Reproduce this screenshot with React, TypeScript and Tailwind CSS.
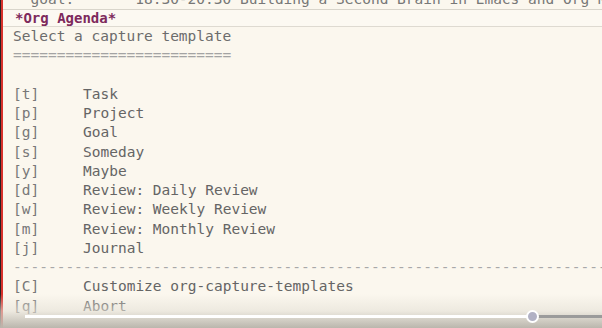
const items: [string, string][] = [
  ['t', 'Task'],
  ['p', 'Project'],
  ['g', 'Goal'],
  ['s', 'Someday'],
  ['y', 'Maybe'],
  ['d', 'Review: Daily Review'],
  ['w', 'Review: Weekly Review'],
  ['m', 'Review: Monthly Review'],
  ['j', 'Journal'],
];

function Row({ k, label }: { k: string; label: string }) {
  return (
    <div className="flex h-[19.25px] items-center whitespace-pre">
      <span className="w-[70px] text-[#787878]">[{k}]</span>
      <span className="text-[#656565]">{label}</span>
    </div>
  );
}

export default function App() {
  return (
    <div
      className="relative flex h-[328px] w-[602px] overflow-hidden bg-[#fbf7ee] text-[14.5px]"
      style={{ fontFamily: '"DejaVu Sans Mono", monospace' }}
    >
      <div className="w-px bg-[#2a2020]" />
      <div className="w-[2px] bg-[#d8322c]" />

      <div className="flex min-w-0 flex-1 flex-col">
        {/* previous window, scrolled mostly out of view */}
        <div className="h-[9px] overflow-hidden">
          <div className="mt-[-10px] whitespace-pre pl-[10px] leading-[19px] text-[#777]">
            {'  goal:       18:30-20:30 Building a Second Brain in Emacs and Org Mode'}
          </div>
        </div>
        <div className="h-px bg-[#d9d5cb]" />
        <div className="flex h-[16px] items-center bg-[#fcf9f2] pl-[12px] text-[14px] font-bold text-[#7e2a5c]">
          *Org Agenda*
        </div>
        <div className="h-px bg-[#dedad1]" />

        <div className="flex flex-col pl-[10px] leading-[19.25px]">
          <div className="h-[19.25px] whitespace-pre text-[#6c6c6c]">Select a capture template</div>
          <div className="h-[19.25px] whitespace-pre text-[#a3a3a3]">=========================</div>
          <div className="h-[19.25px]" />
          {items.map(([k, l]) => (
            <Row key={k} k={k} label={l} />
          ))}
          <div className="h-[19.25px] overflow-hidden whitespace-pre text-[#a8a8a8]">
            {'-'.repeat(80)}
          </div>
          <Row k="C" label="Customize org-capture-templates" />
          <Row k="q" label="Abort" />
        </div>
      </div>

      {/* video player overlay */}
      <div className="absolute inset-x-0 bottom-0 h-[34px] bg-gradient-to-b from-transparent via-[#e4e0d6]/60 to-[#bab6ad]" />
      <div className="absolute bottom-[10px] left-[25px] h-[3px] w-[508px] bg-white" />
      <div className="absolute bottom-[10px] left-[533px] h-[3px] w-[69px] bg-[#9b9b9b]" />
      <div className="absolute bottom-[5px] left-[526px] h-[13px] w-[13px] rounded-full border-2 border-white bg-[#b1b1c4]" />
    </div>
  );
}
